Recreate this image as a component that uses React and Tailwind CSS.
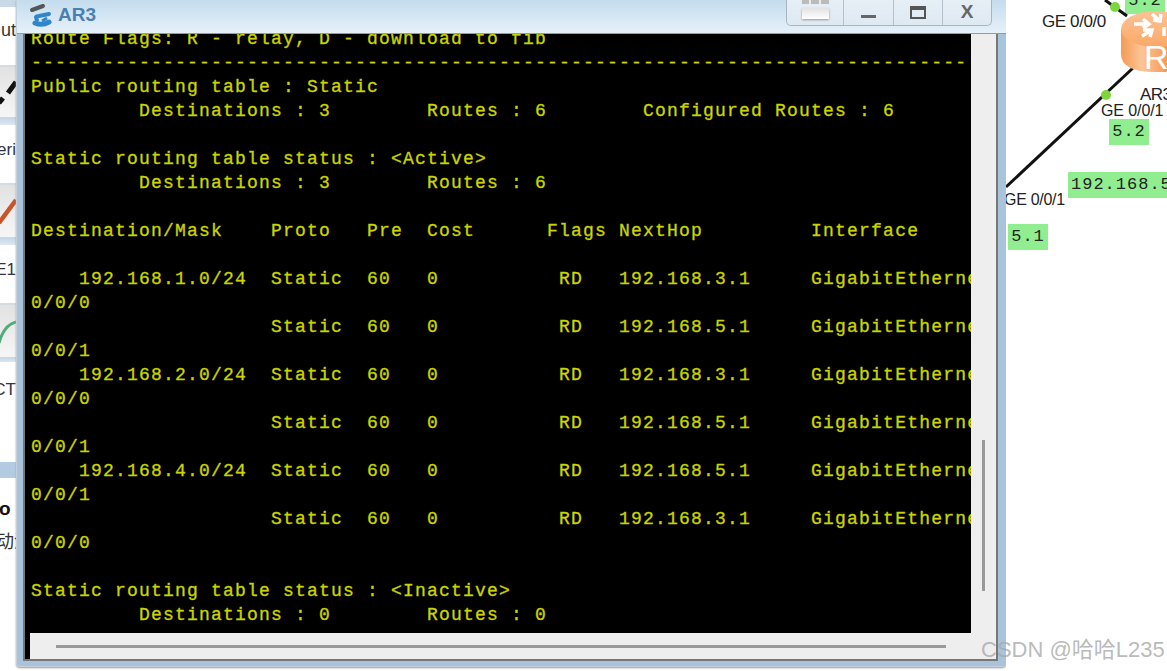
const terminalLines = [
  "Route Flags: R - relay, D - download to fib",
  "------------------------------------------------------------------------------",
  "Public routing table : Static",
  "         Destinations : 3        Routes : 6        Configured Routes : 6",
  "",
  "Static routing table status : <Active>",
  "         Destinations : 3        Routes : 6",
  "",
  "Destination/Mask    Proto   Pre  Cost      Flags NextHop         Interface",
  "",
  "    192.168.1.0/24  Static  60   0          RD   192.168.3.1     GigabitEthernet",
  "0/0/0",
  "                    Static  60   0          RD   192.168.5.1     GigabitEthernet",
  "0/0/1",
  "    192.168.2.0/24  Static  60   0          RD   192.168.3.1     GigabitEthernet",
  "0/0/0",
  "                    Static  60   0          RD   192.168.5.1     GigabitEthernet",
  "0/0/1",
  "    192.168.4.0/24  Static  60   0          RD   192.168.5.1     GigabitEthernet",
  "0/0/1",
  "                    Static  60   0          RD   192.168.3.1     GigabitEthernet",
  "0/0/0",
  "",
  "Static routing table status : <Inactive>",
  "         Destinations : 0        Routes : 0",
];

function SideTile({ height, children }) {
  return (
    <div className={`overflow-hidden bg-gradient-to-b from-[#e2e2e2] to-[#f6f6f6] border-t-2 border-[#d3dbe3] ${height}`}>
      <svg width="16" height="54" viewBox="0 0 16 54">{children}</svg>
    </div>
  );
}

function SideLabel({ text, height, padding }) {
  return (
    <div className={`flex items-start justify-end overflow-hidden bg-white text-[17px] leading-5 text-[#334] whitespace-nowrap ${height} ${padding}`}>
      {text}
    </div>
  );
}

function LeftSliver() {
  return (
    <div className="w-4 shrink-0 h-full flex flex-col bg-white font-['Liberation_Sans',sans-serif]">
      <div className="h-[7px] bg-[#c9d9e8]" />
      <div className="h-[58px] flex items-start justify-end pt-[13px] overflow-hidden text-[18px] leading-5 text-[#333] whitespace-nowrap">ut</div>
      <SideTile height="h-[52px]">
        <path d="M-1 36 L3 31 M8 26 L16 15" stroke="#111" strokeWidth="5" />
      </SideTile>
      <div className="h-2 bg-gradient-to-b from-[#c4d5e5] to-[#dde7f0]" />
      <SideLabel text="eri" height="h-[58px]" padding="pt-[15px]" />
      <SideTile height="h-[54px]">
        <path d="M-1 38 L16 15" stroke="#c8552a" strokeWidth="4.5" />
      </SideTile>
      <div className="h-2 bg-gradient-to-b from-[#c4d5e5] to-[#dde7f0]" />
      <SideLabel text="E1" height="h-[58px]" padding="pt-[15px]" />
      <SideTile height="h-[54px]">
        <path d="M-1 38 Q4 20 16 17" stroke="#4fae78" strokeWidth="3" fill="none" />
      </SideTile>
      <div className="h-[5px] bg-gradient-to-b from-[#c4d5e5] to-[#dde7f0]" />
      <SideLabel text="CT" height="h-[100px]" padding="pt-[18px]" />
      <div className="h-4 bg-[#b3cbe1]" />
      <div className="flex-1 overflow-hidden bg-white pt-[19px]">
        <div className="flex justify-start -ml-[1px] text-[19px] font-bold text-[#111] leading-6 whitespace-nowrap">o</div>
        <div className="flex justify-start -ml-[4px] mt-[7px] text-[18px] text-[#333] leading-6 whitespace-nowrap font-['Noto_Sans_CJK_SC',sans-serif]">动演</div>
      </div>
    </div>
  );
}

function TitleBar() {
  return (
    <div className="h-[33px] shrink-0 flex items-start justify-between pl-3 pr-[14px] bg-gradient-to-b from-[#c4dcee] to-[#e6f1f9]">
      <div className="flex items-center gap-[3px] pt-[1px] h-[28px]">
        <svg width="26" height="28" viewBox="0 0 26 28">
          <path d="M3 9 L14 5" stroke="#555" strokeWidth="4" strokeLinecap="round" />
          <path d="M8 19 Q5 15 10 15 L20 13" stroke="#2f86c9" strokeWidth="4" fill="none" strokeLinecap="round" />
          <path d="M6 22 Q13 25 20 21" stroke="#2f86c9" strokeWidth="5" fill="none" strokeLinecap="round" />
          <path d="M13 20 L18 17" stroke="#2f86c9" strokeWidth="3" />
        </svg>
        <span className="text-[19px] font-bold text-[#4a7fb0] font-['Liberation_Sans',sans-serif] leading-none">AR3</span>
      </div>
      <div className="flex h-[26px] w-[206px] rounded-b-[5px] border border-t-0 border-[#a9b6c2] bg-gradient-to-b from-[#e6eff6] to-[#dfe9f2]">
        <div className="w-[57px] flex justify-center border-r border-[#b4c0cb]">
          <div className="w-[27px] h-[19px] flex flex-col gap-1">
            <div className="h-1 flex gap-[2px]">
              <div className="flex-1 bg-[#bbb]" />
              <div className="flex-1 bg-[#bbb]" />
              <div className="flex-1 bg-[#bbb]" />
            </div>
            <div className="flex-1 bg-gradient-to-b from-[#e2e2e2] to-white shadow-[0_1px_2px_#999]" />
          </div>
        </div>
        <div className="w-[50px] flex items-end justify-center pb-[7px] border-r border-[#b4c0cb]">
          <div className="w-[15px] h-[3px] bg-[#666]" />
        </div>
        <div className="w-[49px] flex items-center justify-center border-r border-[#b4c0cb]">
          <div className="w-4 h-[13px] border-2 border-t-[4px] border-[#555]" />
        </div>
        <div className="flex-1 flex items-center justify-center text-[19px] font-bold text-[#666] font-['Liberation_Sans',sans-serif]">X</div>
      </div>
    </div>
  );
}

function Terminal() {
  return (
    <div className="flex-1 min-h-0 flex flex-col ml-[6px] mr-[8px] border-l-[2px] border-r-[2px] border-b-[2px] border-[#777]">
      <div className="flex-1 min-h-0 flex">
        <div className="flex-1 min-w-0 overflow-hidden bg-black pl-[6px] font-['Liberation_Mono',monospace] text-[18px] leading-6 tracking-[1.2px] text-[#d6d600] [-webkit-text-stroke:0.35px_#b8cc00]">
          <div className="-mt-[7px]">
            {terminalLines.map((line, i) => (
              <div key={i} className="h-6 whitespace-pre">{line}</div>
            ))}
          </div>
        </div>
        <div className="w-[25px] shrink-0 flex justify-center bg-[#eeeeee] pt-[406px] pb-[42px]">
          <div className="w-[3px] h-full bg-[#999]" />
        </div>
      </div>
      <div className="h-[26px] shrink-0 flex bg-black pl-[5px]">
        <div className="flex-1 flex items-center bg-[#eeeeee] pl-[26px] pr-[50px]">
          <div className="w-full h-[3px] bg-[#999]" />
        </div>
      </div>
    </div>
  );
}

function Window() {
  return (
    <div className="w-[990px] shrink-0 h-[667px] flex flex-col bg-[#a9c3da] rounded-b-[4px] border-l border-b border-[#c5d0da] shadow-[0_1px_2px_#999]">
      <TitleBar />
      <div className="flex-1 min-h-0 flex flex-col pb-[5px] border-t border-[#999]">
        <Terminal />
      </div>
    </div>
  );
}

function Tag({ className, children }) {
  return (
    <div className={`absolute h-[26px] flex items-center justify-center bg-[#90ee90] font-['Liberation_Mono',monospace] text-[17px] tracking-[1px] text-[#222] whitespace-nowrap overflow-hidden ${className}`}>
      {children}
    </div>
  );
}

function PortLabel({ className, children }) {
  return (
    <div className={`absolute leading-4 text-[#222] whitespace-nowrap font-['Liberation_Sans',sans-serif] ${className}`}>
      {children}
    </div>
  );
}

function Topology() {
  return (
    <div className="relative flex-1 h-full bg-white overflow-hidden">
      <Tag className="left-[119px] -top-[12px] w-[40px]">5.2</Tag>
      <svg className="absolute left-0 top-0" width="161" height="200" viewBox="0 0 161 200">
        <defs>
          <linearGradient id="routerSide" x1="0" y1="0" x2="1" y2="0">
            <stop offset="0" stopColor="#f59a55" />
            <stop offset="0.45" stopColor="#fcc596" />
            <stop offset="1" stopColor="#f49b58" />
          </linearGradient>
          <linearGradient id="routerTop" x1="0" y1="0" x2="0" y2="1">
            <stop offset="0" stopColor="#fcc294" />
            <stop offset="1" stopColor="#fba968" />
          </linearGradient>
        </defs>
        <path d="M0 187 L127 68" stroke="#111" strokeWidth="3" />
        <path d="M99 0 L121 16" stroke="#111" strokeWidth="3" />
        <circle cx="100" cy="95" r="5" fill="#7ed63f" />
        <circle cx="109" cy="7" r="5" fill="#7ed63f" />
        <path d="M115 29 V54 Q115 72 150 72 H161 V29 Z" fill="url(#routerSide)" />
        <ellipse cx="150" cy="29" rx="35" ry="18" fill="url(#routerTop)" />
        <g stroke="#fff" strokeWidth="3.5" fill="none">
          <path d="M128 24 L142 24 M137 19 L143 24 L137 28" />
          <path d="M136 36 L146 30 M137 30 L146 30 L144 37" />
          <path d="M146 14 L154 21 M147 20 L154 21 L155 14" />
          <path d="M158 27 L158 36" />
        </g>
      </svg>
      <div className="absolute left-[138px] top-[39px] h-[31px] overflow-hidden text-[34px] leading-9 text-white font-['Liberation_Sans',sans-serif]">R</div>
      <PortLabel className="left-[36px] top-[14px] text-[17px] tracking-[-0.4px]">GE 0/0/0</PortLabel>
      <div className="absolute left-[134px] top-[87px] text-[17px] leading-4 text-[#222] tracking-[-0.5px] font-['Liberation_Sans',sans-serif]">AR3</div>
      <PortLabel className="left-[95px] top-[103px] text-[16px] tracking-[-0.1px]">GE 0/0/1</PortLabel>
      <Tag className="left-[103px] top-[119px] w-[40px]">5.2</Tag>
      <Tag className="left-[62px] top-[172px] w-[100px] justify-start pl-[3px]">192.168.5</Tag>
      <PortLabel className="-left-[2px] top-[192px] text-[16px] tracking-[-0.3px]">GE 0/0/1</PortLabel>
      <Tag className="left-[2px] top-[224px] w-[40px]">5.1</Tag>
    </div>
  );
}

export default function App() {
  return (
    <div className="relative w-[1167px] h-[671px] flex items-start overflow-hidden bg-white">
      <LeftSliver />
      <Window />
      <Topology />
      <div className="absolute left-[981px] top-[636px] text-[22px] leading-7 text-[#a8a8a8]/80 whitespace-nowrap font-['Liberation_Sans','Noto_Sans_CJK_SC',sans-serif]">
        CSDN @哈哈L235
      </div>
    </div>
  );
}
